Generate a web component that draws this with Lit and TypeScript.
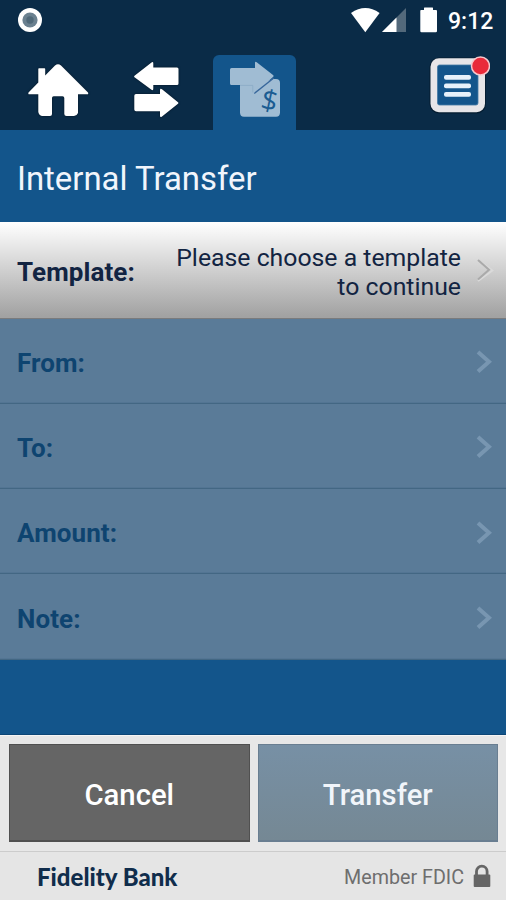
import { LitElement, html, css } from "lit";
import { customElement, property } from "lit/decorators.js";

@customElement("status-bar")
class StatusBar extends LitElement {
  static styles = css`
    :host { display: flex; height: 40px; align-items: center; padding: 0 13px 0 17px; box-sizing: border-box; color: #fff; }
    svg { display: block; }
    .spacer { flex: 1; }
    .signal { margin-left: 2px; }
    .battery { margin: 0 11px 0 13px; }
    .clock { font: 500 23px/40px Roboto, sans-serif; letter-spacing: 0.05px; width: 45px; white-space: nowrap; padding-top: 3px; }
  `;
  render() {
    return html`
      <svg width="26" height="26" viewBox="0 0 26 26"><circle cx="13" cy="13" r="12" fill="#fff"/><circle cx="13" cy="13" r="7.6" fill="#6b8190"/><circle cx="13" cy="13" r="3.7" fill="#506979"/></svg>
      <span class="spacer"></span>
      <svg width="29" height="26" viewBox="0 0 29 26"><path d="M0 6Q14.3-4 28.6 6L14.3 25.3Z" fill="#fff"/></svg>
      <svg class="signal" width="25" height="26" viewBox="0 0 25 26"><path d="M24 1V25H0Z" fill="#53697b"/><path d="M14.5 10.5V25H0Z" fill="#fff"/></svg>
      <svg class="battery" width="17" height="26" viewBox="0 0 17 26"><path d="M1 3H4V1Q4 .5 4.500 .5H12.500Q13 .5 13 1V3H16Q17 3 17 4V24Q17 25.300 15.700 25.300H1.500Q.3 25.300 .3 24V4Q.3 3 1 3Z" fill="#fff"/></svg>
      <span class="clock">9:12</span>
    `;
  }
}

@customElement("nav-tabs")
class NavTabs extends LitElement {
  static styles = css`
    :host { display: flex; height: 90px; align-items: flex-start; padding: 15px 16px 0 22px; box-sizing: border-box; }
    svg { display: block; }
    .home { margin-right: 34px; }
    .shadow { filter: drop-shadow(0 0 1px rgba(0, 0, 0, 0.5)); }
    .tab { width: 83px; height: 75px; margin-left: 29px; border-radius: 6px 6px 0 0; background: #13558b; }
    .spacer { flex: 1; }
    .dollar { font: 28.500px "Open Sans", sans-serif; }
  `;
  render() {
    return html`
      <svg class="home shadow" width="72" height="70" viewBox="22 55 72 70"><path d="M28.500 92.500L38.300 82.600V69Q38.300 68.300 39 68.300H44.500Q45.200 68.300 45.200 69V75.600L55 65.600Q58 62.700 61 65.600L88 92.500Q88.800 94.300 87 94.300H78V113Q77 115.700 74 116H66.500Q64.300 116 64.300 114V98Q64.300 96.300 62.500 96.300H53.700Q52 96.300 52 98V114Q52 116 50 116H42Q39 115.500 38.300 112V94.300H29.500Q27.800 94.300 28.500 92.500Z" fill="#fff"/></svg>
      <svg class="shadow" width="56" height="70" viewBox="128 55 56 70"><g fill="#fff"><path d="M134.500 75.700L151.500 62.500Q153.300 61.300 153.300 63.500V67.500H177Q178.500 67.500 178.500 69V83.500Q178.500 85 177 85H153.300V88.500Q153.300 91 151.500 89.700L134.500 77.300Q133.700 76.500 134.500 75.700Z"/><path d="M178 102.200L162 89.200Q160 88 160 90.200V94H136Q134.300 94 134.300 95.700V109.500Q134.300 111.200 136 111.200H160V115.500Q160 118 162 116.500L178 103.800Q179 103 178 102.200Z"/></g></svg>
      <div class="tab">
        <svg width="83" height="75" viewBox="213 55 83 75">
          <path d="M240 83H262L273.300 79H276Q280 79 280 83V112.500Q280 116.700 276 116.700H244Q240 116.700 240 112.500Z" fill="#a0bcd3"/>
          <path d="M231.500 68H255V63Q255 61 256.700 62.300L273 75Q274.200 76 273 77L256.700 91.500Q254.300 93 254.300 91V85H231.500Q230 85 230 83.500V69.500Q230 68 231.500 68Z" fill="#a0bcd3"/>
          <path d="M240 85.400H252.800V92.500" fill="none" stroke="#86a7c4" stroke-width=".7"/>
          <path d="M254.300 93.400L273.800 78" fill="none" stroke="#37669b" stroke-width="1.300"/>
          <text class="dollar" x="269.500" y="110.500" text-anchor="middle" fill="#1b5c92" transform="rotate(12 269 101)">$</text>
        </svg>
      </div>
      <span class="spacer"></span>
      <svg width="65" height="70" viewBox="425 55 65 70">
        <rect x="429.500" y="57.500" width="56.500" height="56" rx="9.500" fill="#051d31"/>
        <rect x="430.500" y="58.200" width="54.500" height="54" rx="8.500" fill="#e6e5e8"/>
        <rect x="437.500" y="65" width="40.500" height="40" rx="2" fill="#13558b" stroke="#4378a3" stroke-width=".8"/>
        <g fill="#e6f1fa"><rect x="444" y="75" width="27" height="4.800" rx="2"/><rect x="444" y="83.400" width="27" height="4.800" rx="2"/><rect x="444" y="92" width="27" height="4.800" rx="2"/></g>
        <circle cx="480.500" cy="66" r="9" fill="#e92a3a" stroke="#f6c8cd" stroke-width="1.500"/>
      </svg>
    `;
  }
}

@customElement("form-row")
class FormRow extends LitElement {
  @property() label = "";
  @property() value = "";
  @property({ type: Boolean, reflect: true }) active = false;
  static styles = css`
    :host { display: flex; align-items: center; height: 85.300px; box-sizing: border-box; padding: 4px 12px 0 17px; background: #5a7b98; border-bottom: 1px solid #436783; box-shadow: inset 0 -1px #537593; color: #0e4470; font: 26px/29px Roboto, sans-serif; }
    :host([active]) { height: 96.500px; padding-top: 5px; color: #122442; background: linear-gradient(#fff, #f1f1f1 15%, #a2a2a2 98%); border-bottom-color: #7a7b7d; box-shadow: none; }
    .label { font-weight: 700; font-size: 26px; letter-spacing: 0.08px; padding-top: 1px; white-space: nowrap; }
    .value { flex: 1; text-align: right; padding: 0 14px 0 30px; font-size: 24.800px; white-space: pre-line; }
    svg { display: block; margin-bottom: 1px; }
    .arrow { fill: none; stroke: #7896b1; stroke-width: 4; }
    :host([active]) svg { margin-bottom: 4px; }
    :host([active]) .arrow { stroke: #aaa; stroke-width: 2; }
    .light { display: none; fill: none; stroke: #dadada; stroke-width: 1.800; }
    :host([active]) .light { display: inline; }
  `;
  render() {
    return html`
      <span class="label">${this.label}</span>
      <span class="value">${this.value}</span>
      <svg width="19" height="26" viewBox="0 0 19 26"><path class="light" d="M3 24L17.500 13.500L4 3.500"/><path class="arrow" d="M3 3L14 12.800L3 22.600"/></svg>
    `;
  }
}

@customElement("app-root")
class AppRoot extends LitElement {
  static styles = css`
    :host { display: flex; flex-direction: column; width: 506px; height: 900px; overflow: hidden; background: #13558b; font-family: Roboto, sans-serif; }
    .top { background: #0a2b47; }
    .title { height: 92px; box-sizing: border-box; padding: 5px 17px 0; font-size: 32.900px; line-height: 87px; color: #f1f5fc; white-space: nowrap; }
    .fill { flex: 1; border-bottom: 1px solid #0d4676; }
    .actions { display: flex; gap: 8px; padding: 8px 8px 9px 9px; height: 116px; box-sizing: border-box; background: #e7e7e7; border-top: 1px solid #f5f5f5; }
    button { flex: 1; box-sizing: border-box; border: 1px solid #505050; border-width: 1px 1px 2px; padding: 4px 0 0; margin: 0; color: #fff; font: 500 29.300px Roboto, sans-serif; background: #656565; }
    .transfer { background: linear-gradient(#7790a5, #758894); border: 1px solid #697e91; border-bottom-width: 2px; color: #f1f5fa; }
    .footer { display: flex; align-items: center; justify-content: space-between; height: 49px; box-sizing: border-box; border-top: 1px solid #ccc; background: #e5e5e5; padding: 0 15px 0 37px; }
    .bank { font: 900 24px Lato, sans-serif; color: #102d4c; white-space: nowrap; }
    .fdic { display: flex; align-items: center; gap: 9px; font-size: 19.700px; color: #6e6e6e; padding-top: 2px; white-space: nowrap; }
    .fdic svg { display: block; margin-bottom: 2px; }
  `;
  render() {
    return html`
      <div class="top"><status-bar></status-bar><nav-tabs></nav-tabs></div>
      <div class="title">Internal Transfer</div>
      <form-row active label="Template:" .value=${"Please choose a template\nto continue"}></form-row>
      ${["From:", "To:", "Amount:", "Note:"].map((l) => html`<form-row label=${l}></form-row>`)}
      <div class="fill"></div>
      <div class="actions"><button>Cancel</button><button class="transfer">Transfer</button></div>
      <div class="footer">
        <span class="bank">Fidelity Bank</span>
        <span class="fdic">Member FDIC
          <svg width="18" height="24" viewBox="0 0 18 24"><path d="M3.500 12V7.500A5.300 5.300 0 0 1 14.100 7.500V12" fill="none" stroke="#666" stroke-width="2.800"/><rect x=".7" y="10.500" width="16.600" height="12.500" rx="1" fill="#666"/></svg>
        </span>
      </div>
    `;
  }
}
